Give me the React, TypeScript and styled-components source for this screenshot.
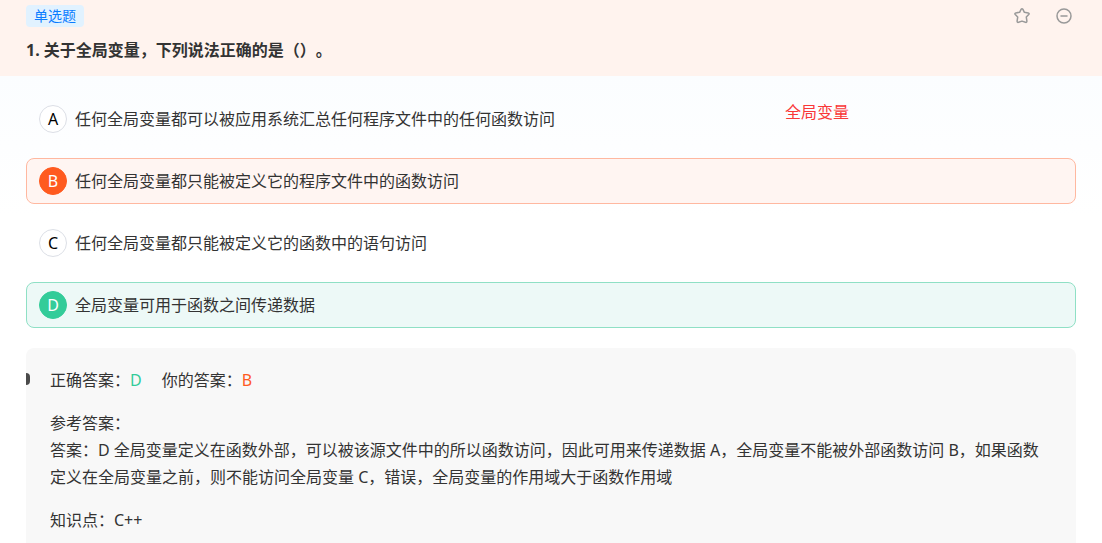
import React from "react";
import styled, { createGlobalStyle } from "styled-components";

type Mark = "plain" | "wrong" | "right";

const GlobalStyle = createGlobalStyle`
  *, *::before, *::after { box-sizing: border-box; }
  body {
    margin: 0;
    background: #fff;
    color: #333;
    font: 16px/27px "Noto Sans", "Noto Sans CJK SC", sans-serif;
    text-spacing-trim: space-all;
  }
`;

const Page = styled.main`
  min-height: 100vh;
  display: flex;
  flex-direction: column;
`;

const Header = styled.header`
  padding: 5px 26px 12px;
  background: #fff3ee;
`;

const HeaderTop = styled.div`
  display: flex;
  justify-content: space-between;
  align-items: center;
`;

const Tag = styled.span`
  padding: 0 8px;
  border-radius: 4px;
  background: #e1f2ff;
  color: #0a7cff;
  font-size: 14px;
  line-height: 22px;
`;

const Actions = styled.div`
  display: flex;
  gap: 22px;
  padding-right: 2px;
`;

const IconButton = styled.button`
  display: flex;
  padding: 0;
  border: 0;
  background: none;
  cursor: pointer;
  svg {
    width: 20px;
    height: 20px;
    fill: none;
    stroke: #999;
    stroke-width: 1.5;
    stroke-linejoin: round;
    stroke-linecap: round;
  }
`;

const Title = styled.h1`
  margin: 10px 0 0;
  font-size: 16px;
  font-weight: 700;
  line-height: 27px;
`;

const Body = styled.div`
  flex: 1;
  display: flex;
  flex-direction: column;
  gap: 20px;
  padding: 20px 26px 0;
  background: linear-gradient(#fbfdff, #fff 140px);
`;

const Options = styled.fieldset`
  position: relative;
  display: flex;
  flex-direction: column;
  gap: 16px;
  margin: 0;
  padding: 0;
  border: 0;
  min-width: 0;
`;

const optionColors = {
  plain: { border: "transparent", fill: "transparent" },
  wrong: { border: "#ffb8a0", fill: "#fff5f2" },
  right: { border: "#8fe0c5", fill: "#edf9f7" },
};

const Option = styled.label<{ $mark: Mark }>`
  display: flex;
  align-items: center;
  gap: 8px;
  padding: 8px 12px;
  border: 1px solid ${(p) => optionColors[p.$mark].border};
  border-radius: 8px;
  background: ${(p) => optionColors[p.$mark].fill};
  cursor: pointer;
`;

const badgeColors = {
  plain: { border: "#dcdfe6", fill: "#fff", text: "#000" },
  wrong: { border: "#ff5a1f", fill: "#ff5a1f", text: "#fff" },
  right: { border: "#33cc99", fill: "#33cc99", text: "#fff" },
};

const Badge = styled.span<{ $mark: Mark }>`
  flex: none;
  width: 28px;
  height: 28px;
  border: 1px solid ${(p) => badgeColors[p.$mark].border};
  border-radius: 50%;
  background: ${(p) => badgeColors[p.$mark].fill};
  color: ${(p) => badgeColors[p.$mark].text};
  line-height: 26px;
  text-align: center;
`;

const HiddenRadio = styled.input`
  position: absolute;
  width: 1px;
  height: 1px;
  margin: 0;
  opacity: 0;
`;

const Note = styled.span`
  position: absolute;
  top: 3px;
  left: 759px;
  color: #f93838;
`;

const Analysis = styled.section`
  position: relative;
  flex: 1;
  display: flex;
  flex-direction: column;
  gap: 16px;
  padding: 19px 24px 8px;
  border-radius: 8px 8px 0 0;
  background: #f8f8f8;
  overflow: hidden;
`;

const EdgeDot = styled.span`
  position: absolute;
  top: 25px;
  left: -6px;
  width: 10px;
  height: 12px;
  border-radius: 4px;
  background: #4a4a4a;
`;

const AnswerLine = styled.div`
  display: flex;
  gap: 20px;
`;

const Letter = styled.span<{ $mark: Mark }>`
  color: ${(p) => badgeColors[p.$mark].fill};
`;

const Paragraph = styled.p`
  margin: 0;
`;

const options: { key: string; text: string; mark: Mark }[] = [
  { key: "A", text: "任何全局变量都可以被应用系统汇总任何程序文件中的任何函数访问", mark: "plain" },
  { key: "B", text: "任何全局变量都只能被定义它的程序文件中的函数访问", mark: "wrong" },
  { key: "C", text: "任何全局变量都只能被定义它的函数中的语句访问", mark: "plain" },
  { key: "D", text: "全局变量可用于函数之间传递数据", mark: "right" },
];

export default function App() {
  return (
    <>
      <GlobalStyle />
      <Page>
        <Header>
          <HeaderTop>
            <Tag>单选题</Tag>
            <Actions>
              <IconButton type="button" aria-label="收藏">
                <svg viewBox="0 0 20 20">
                  <path d="M9.2 3.2Q10 2.1 10.8 3.2L12.4 6.3L16.2 6.9Q17.7 7.3 16.7 8.5L14.3 11.1L14.9 15.1Q14.9 16.7 13.5 16.3L10 15.1L6.5 16.3Q5.1 16.7 5.1 15.1L5.7 11.1L3.3 8.5Q2.3 7.3 3.8 6.9L7.6 6.3Z" />
                </svg>
              </IconButton>
              <IconButton type="button" aria-label="移除">
                <svg viewBox="0 0 20 20">
                  <circle cx="10" cy="10" r="7" />
                  <path d="M7 10H13" />
                </svg>
              </IconButton>
            </Actions>
          </HeaderTop>
          <Title>1. 关于全局变量，下列说法正确的是（）。</Title>
        </Header>
        <Body>
          <Options aria-label="选项">
            {options.map((o) => (
              <Option key={o.key} $mark={o.mark}>
                <HiddenRadio type="radio" name="answer" value={o.key} defaultChecked={o.key === "B"} />
                <Badge $mark={o.mark}>{o.key}</Badge>
                <span>{o.text}</span>
              </Option>
            ))}
            <Note>全局变量</Note>
          </Options>
          <Analysis>
            <EdgeDot />
            <AnswerLine>
              <span>正确答案：<Letter $mark="right">D</Letter></span>
              <span>你的答案：<Letter $mark="wrong">B</Letter></span>
            </AnswerLine>
            <Paragraph>
              参考答案：
              <br />
              答案：D 全局变量定义在函数外部，可以被该源文件中的所以函数访问，因此可用来传递数据 A，全局变量不能被外部函数访问 B，如果函数定义在全局变量之前，则不能访问全局变量 C，错误，全局变量的作用域大于函数作用域
            </Paragraph>
            <Paragraph>知识点：C++</Paragraph>
          </Analysis>
        </Body>
      </Page>
    </>
  );
}
